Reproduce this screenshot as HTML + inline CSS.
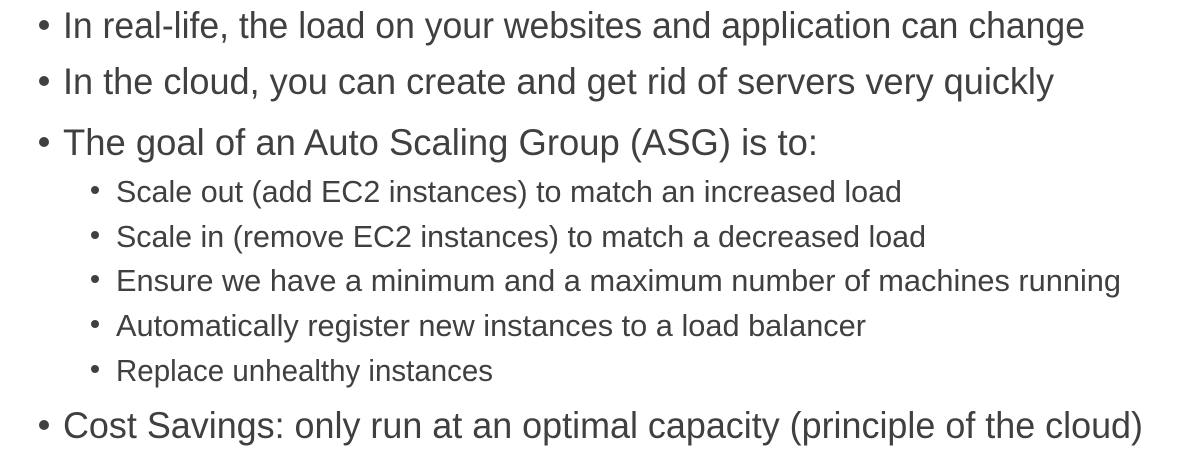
<!DOCTYPE html>
<html><head><meta charset="utf-8"><style>
html,body{margin:0;padding:0;background:#fff;width:1187px;height:470px;overflow:hidden}
svg text{font-family:"Liberation Sans",sans-serif;fill:#404040}
</style></head><body>
<svg width="1187" height="470" viewBox="0 0 1187 470" xmlns="http://www.w3.org/2000/svg">
<g fill="#404040">
<circle cx="44" cy="25" r="5"/>
<circle cx="44" cy="81" r="5"/>
<circle cx="44" cy="142" r="5"/>
<circle cx="44" cy="425" r="5"/>
<circle cx="95" cy="190" r="4"/>
<circle cx="95" cy="235" r="4"/>
<circle cx="95" cy="279" r="4"/>
<circle cx="95" cy="324" r="4"/>
<circle cx="95" cy="369" r="4"/>
</g>
<g font-size="37">
<text x="63" y="38" textLength="1022" lengthAdjust="spacingAndGlyphs">In real-life, the load on your websites and application can change</text>
<text x="63" y="94" textLength="991" lengthAdjust="spacingAndGlyphs">In the cloud, you can create and get rid of servers very quickly</text>
<text x="63" y="155" textLength="755" lengthAdjust="spacingAndGlyphs">The goal of an Auto Scaling Group (ASG) is to:</text>
<text x="63" y="438" textLength="1080" lengthAdjust="spacingAndGlyphs">Cost Savings: only run at an optimal capacity (principle of the cloud)</text>
</g>
<g font-size="31">
<text x="116" y="202" textLength="786" lengthAdjust="spacingAndGlyphs">Scale out (add EC2 instances) to match an increased load</text>
<text x="116" y="247" textLength="810" lengthAdjust="spacingAndGlyphs">Scale in (remove EC2 instances) to match a decreased load</text>
<text x="116" y="291" textLength="1005" lengthAdjust="spacingAndGlyphs">Ensure we have a minimum and a maximum number of machines running</text>
<text x="116" y="336" textLength="750" lengthAdjust="spacingAndGlyphs">Automatically register new instances to a load balancer</text>
<text x="116" y="381" textLength="377" lengthAdjust="spacingAndGlyphs">Replace unhealthy instances</text>
</g>
</svg>
</body></html>
